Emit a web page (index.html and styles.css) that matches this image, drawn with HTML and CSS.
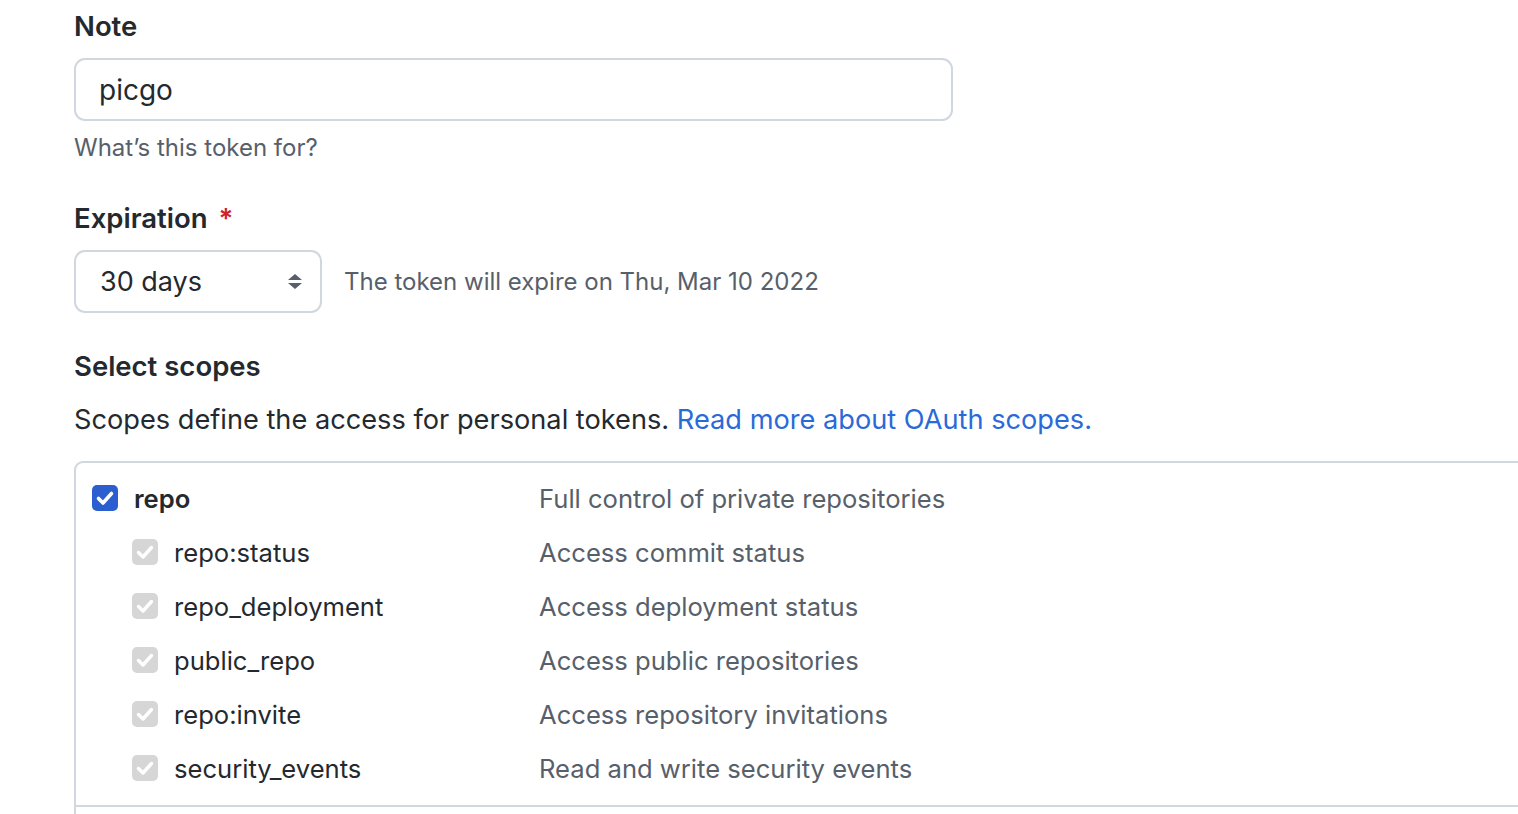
FILE: index.html
```html
<!DOCTYPE html>
<html lang="en">
<head>
<meta charset="utf-8">
<title>New personal access token</title>
<link rel="stylesheet" href="styles.css">
</head>
<body>
<main class="page">
  <div class="group group-note">
    <label class="label">Note</label>
    <div class="input">picgo</div>
    <p class="hint">What’s this token for?</p>
  </div>

  <div class="group group-exp">
    <label class="label">Expiration <span class="req">*</span></label>
    <div class="exp-row">
      <div class="select">
        <span>30 days</span>
        <svg class="arrows" width="16" height="18" viewBox="0 0 16 18"><path d="M8 1 L15 7 L1 7 Z M1 10 L15 10 L8 16 Z" fill="#57606a"/></svg>
      </div>
      <span class="exp-note">The token will expire on Thu, Mar 10 2022</span>
    </div>
  </div>

  <div class="group group-scopes">
    <h3 class="label">Select scopes</h3>
    <p class="lead">Scopes define the access for personal tokens. <a href="#" class="link">Read more about OAuth scopes.</a></p>
  </div>

  <div class="scopes">
    <div class="scope-block">
      <div class="row row-parent">
        <span class="cb cb-on"><svg viewBox="0 0 26 26" width="26" height="26"><path d="M6.5 13.5 L11 18 L19.5 8.5" stroke="#fff" stroke-width="3.6" fill="none" stroke-linecap="round" stroke-linejoin="round"/></svg></span>
        <span class="name name-parent">repo</span>
        <span class="desc">Full control of private repositories</span>
      </div>
      <div class="row row-child">
        <span class="cb cb-dis"><svg viewBox="0 0 26 26" width="26" height="26"><path d="M6.5 13.5 L11 18 L19.5 8.5" stroke="#fff" stroke-width="3.4" fill="none" stroke-linecap="round" stroke-linejoin="round"/></svg></span>
        <span class="name">repo:status</span>
        <span class="desc">Access commit status</span>
      </div>
      <div class="row row-child">
        <span class="cb cb-dis"><svg viewBox="0 0 26 26" width="26" height="26"><path d="M6.5 13.5 L11 18 L19.5 8.5" stroke="#fff" stroke-width="3.4" fill="none" stroke-linecap="round" stroke-linejoin="round"/></svg></span>
        <span class="name">repo_deployment</span>
        <span class="desc">Access deployment status</span>
      </div>
      <div class="row row-child">
        <span class="cb cb-dis"><svg viewBox="0 0 26 26" width="26" height="26"><path d="M6.5 13.5 L11 18 L19.5 8.5" stroke="#fff" stroke-width="3.4" fill="none" stroke-linecap="round" stroke-linejoin="round"/></svg></span>
        <span class="name">public_repo</span>
        <span class="desc">Access public repositories</span>
      </div>
      <div class="row row-child">
        <span class="cb cb-dis"><svg viewBox="0 0 26 26" width="26" height="26"><path d="M6.5 13.5 L11 18 L19.5 8.5" stroke="#fff" stroke-width="3.4" fill="none" stroke-linecap="round" stroke-linejoin="round"/></svg></span>
        <span class="name">repo:invite</span>
        <span class="desc">Access repository invitations</span>
      </div>
      <div class="row row-child">
        <span class="cb cb-dis"><svg viewBox="0 0 26 26" width="26" height="26"><path d="M6.5 13.5 L11 18 L19.5 8.5" stroke="#fff" stroke-width="3.4" fill="none" stroke-linecap="round" stroke-linejoin="round"/></svg></span>
        <span class="name">security_events</span>
        <span class="desc">Read and write security events</span>
      </div>
    </div>
    <div class="scope-block scope-next"></div>
  </div>
</main>
</body>
</html>
```

FILE: styles.css
```css
html, body {
  margin: 0;
  padding: 0;
  background: #ffffff;
  overflow: hidden;
}
body {
  font-family: Inter, "Noto Sans", "Liberation Sans", sans-serif;
  color: #24292f;
  width: 1518px;
  height: 814px;
}
.page {
  padding-left: 74px;
  padding-top: 8px;
}
.label {
  display: block;
  font-size: 27.5px;
  font-weight: 600;
  line-height: 36px;
  margin: 0;
}
.req {
  color: #cf222e;
  margin-left: 4px;
}
.input {
  box-sizing: border-box;
  width: 879px;
  height: 63px;
  margin-top: 14px;
  border: 2px solid #d0d7de;
  border-radius: 11px;
  padding: 0 23px;
  font-size: 28px;
  line-height: 60px;
}
.hint {
  margin: 9px 0 0;
  font-size: 24px;
  line-height: 36px;
  color: #57606a;
}
.group-exp {
  margin-top: 34px;
}
.exp-row {
  display: flex;
  align-items: center;
  gap: 22px;
  margin-top: 14px;
}
.select {
  box-sizing: border-box;
  width: 248px;
  height: 63px;
  border: 2px solid #d0d7de;
  border-radius: 11px;
  padding: 0 17px 0 24px;
  display: flex;
  align-items: center;
  justify-content: space-between;
  font-size: 27px;
}
.arrows {
  display: block;
}
.exp-note {
  font-size: 24px;
  color: #57606a;
}
.group-scopes {
  margin-top: 35px;
}
.lead {
  margin: 18px 0 0;
  font-size: 27.2px;
  line-height: 36px;
}
.link {
  color: #2a6ad8;
  text-decoration: none;
}
.scopes {
  margin-top: 23px;
  width: 1600px;
  border-left: 2px solid #d0d7de;
  border-top: 2px solid #d0d7de;
  border-top-left-radius: 9px;
}
.scope-block {
  padding: 8px 0 10px 16px;
  border-bottom: 2px solid #d0d7de;
}
.scope-next {
  height: 40px;
  border-bottom: none;
}
.row {
  display: flex;
  align-items: center;
  height: 54px;
}
.cb {
  width: 26px;
  height: 26px;
  border-radius: 5px;
  flex: none;
  display: block;
}
.cb svg { display: block; }
.cb-on { background: #2b5fcf; }
.cb-dis { background: #d6d6d6; }
.row-child .cb { margin-left: 40px; }
.name {
  font-size: 25.6px;
  margin-left: 16px;
}
.name-parent {
  font-weight: 600;
}
.row-parent .name { width: 405px; }
.row-child .name { width: 365px; }
.desc {
  font-size: 25.6px;
  color: #57606a;
}
```
